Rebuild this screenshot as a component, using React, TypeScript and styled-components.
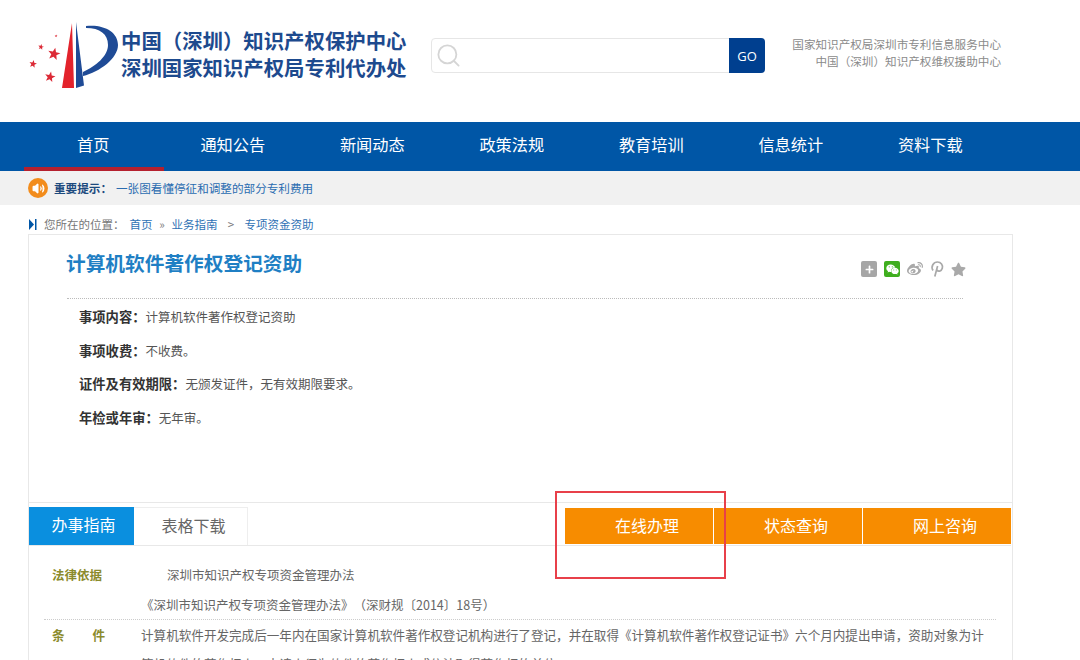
import React from 'react';
import styled, { createGlobalStyle } from 'styled-components';
import { Search, Volume2 } from 'lucide-react';
import { FaPlus, FaStar, FaWeibo, FaWeixin } from 'react-icons/fa';

const GlobalStyle = createGlobalStyle`
  html, body {
    margin: 0;
    padding: 0;
    height: 660px;
    overflow: hidden;
    background: #fff;
    font-family: "Noto Sans CJK SC", "Liberation Sans", sans-serif;
    text-spacing-trim: space-all;
  }
`;

const Page = styled.div`
  position: relative;
  width: 1080px;
  height: 660px;
  overflow: hidden;
`;

const Header = styled.header`
  height: 122px;
  display: flex;
  align-items: flex-start;
  box-sizing: border-box;
  padding: 20px 79px 0 28px;
`;

const LogoMark = styled.svg`
  width: 93px;
  height: 72px;
  flex: none;
`;

const LogoText = styled.div`
  width: 285px;
  flex: none;
  margin-top: 7px;
  font-size: 20.4px;
  line-height: 27px;
  font-weight: 700;
  color: #1d4a8e;
  white-space: nowrap;
`;

const SearchBox = styled.div`
  width: 334px;
  height: 35px;
  margin: 18px 0 0 25px;
  flex: none;
  display: flex;
  box-sizing: border-box;
  border: 1px solid #e6e6e6;
  border-radius: 4px;
`;

const SearchIcon = styled.div`
  flex: 1;
  display: flex;
  align-items: center;
  padding-left: 3px;
  color: #d5d5d5;
`;

const GoButton = styled.button`
  width: 36px;
  margin: -1px;
  border: none;
  border-radius: 0 4px 4px 0;
  background: #003f8f;
  color: #fff;
  font: 13px "Open Sans", "Liberation Sans", sans-serif;
  padding: 0;
`;

const Org = styled.div`
  margin: 16px 0 0 auto;
  font-size: 11.6px;
  line-height: 17px;
  color: #8a8a8a;
  text-align: right;
  white-space: nowrap;
`;

const Nav = styled.nav`
  height: 49px;
  display: flex;
  padding-left: 24px;
  background: #0056a6;
`;

const NavItem = styled.a<{ $active?: boolean }>`
  width: 139.5px;
  box-sizing: border-box;
  padding-right: 1px;
  text-align: center;
  line-height: 45px;
  font-size: 16.2px;
  color: #fff;
  border-bottom: 4px solid ${(p) => (p.$active ? '#b5202e' : 'transparent')};
`;

const Notice = styled.div`
  height: 34px;
  display: flex;
  align-items: center;
  padding-left: 28px;
  background: #f1f1f1;
  font-size: 11.6px;
`;

const NoticeIcon = styled.span`
  width: 20px;
  height: 20px;
  margin-right: 6px;
  border-radius: 50%;
  background: #f28c1c;
  color: #fff;
  display: flex;
  align-items: center;
  justify-content: center;
`;

const NoticeLabel = styled.b`
  width: 62px;
  color: #1d4a7e;
`;

const NoticeText = styled.span`
  color: #2a6cb0;
`;

const Crumbs = styled.div`
  height: 29px;
  display: flex;
  align-items: flex-end;
  box-sizing: border-box;
  padding: 0 0 1px 29px;
  font-size: 11.5px;
  line-height: 17px;
  color: #777;
`;

const CrumbMark = styled.svg`
  width: 8px;
  height: 11px;
  margin: 0 7px 3px 0;
`;

const CrumbLink = styled.span`
  color: #2f72b5;
`;

const CrumbSep = styled.span<{ $w: number }>`
  width: ${(p) => p.$w}px;
  text-align: center;
  color: #777;
`;

const Card = styled.section`
  width: 985px;
  height: 269px;
  margin: 0 0 0 28px;
  box-sizing: border-box;
  border: 1px solid #e8e8e8;
  padding: 13px 49px 0 38px;
`;

const TitleRow = styled.div`
  display: flex;
  justify-content: space-between;
  align-items: flex-start;
  height: 50px;
  border-bottom: 1px dotted #bbb;
`;

const Title = styled.h1`
  margin: 0 0 0 -1px;
  font-size: 19.7px;
  line-height: 29px;
  font-weight: 700;
  color: #1f7fc4;
`;

const Share = styled.div`
  display: flex;
  align-items: center;
  gap: 7px;
  margin: 13px -3px 0 0;
  color: #a9a9a9;
`;

const ShareSquare = styled.span<{ $bg: string }>`
  width: 16px;
  height: 16px;
  border-radius: 2px;
  background: ${(p) => p.$bg};
  color: #fff;
  display: flex;
  align-items: center;
  justify-content: center;
`;

const Facts = styled.div`
  padding: 1px 0 0 12px;
`;

const Fact = styled.p`
  margin: 0;
  font-size: 12.5px;
  line-height: 33.7px;
  color: #555;
  white-space: nowrap;
`;

const FactLabel = styled.b`
  font-size: 13.3px;
  color: #333;
`;

const Guide = styled.section`
  width: 985px;
  height: 157px;
  margin-left: 28px;
  box-sizing: border-box;
  border-left: 1px solid #e8e8e8;
  border-right: 1px solid #e8e8e8;
  padding-top: 4px;
`;

const TabBar = styled.div`
  display: flex;
  height: 38px;
  margin-right: 1px;
  border-bottom: 1px solid #e8e8e8;
`;

const Tab = styled.div<{ $active?: boolean }>`
  width: ${(p) => (p.$active ? 105 : 114)}px;
  box-sizing: border-box;
  text-align: center;
  font-size: 16px;
  line-height: 35px;
  padding-left: ${(p) => (p.$active ? 4 : 6)}px;
  color: ${(p) => (p.$active ? '#fff' : '#666')};
  background: ${(p) => (p.$active ? '#0a8fdf' : '#fff')};
  border-top: ${(p) => (p.$active ? 'none' : '1px solid #eee')};
  border-right: ${(p) => (p.$active ? 'none' : '1px solid #eee')};
`;

const Actions = styled.div`
  margin-left: auto;
  display: flex;
  gap: 1px;
  height: 36px;
  margin-top: 1px;
`;

const Action = styled.a`
  width: 148px;
  padding-left: 16px;
  box-sizing: border-box;
  background: #f78c00;
  color: #fff;
  text-align: center;
  font-size: 16px;
  line-height: 34px;
`;

const GuideBody = styled.div`
  padding: 16px 16px 0 15px;
`;

const Line = styled.div<{ $indent: number; $h: number }>`
  display: flex;
  height: ${(p) => p.$h}px;
  font-size: 12.5px;
  line-height: 26px;
  color: #666;
  white-space: nowrap;
  padding-left: ${(p) => p.$indent}px;
`;

const Term = styled.b`
  width: 123px;
  flex: none;
  padding-left: 8px;
  box-sizing: border-box;
  color: #8b8b2c;
`;

const CondRow = styled.div`
  display: flex;
  border-top: 1px dotted #ccc;
  font-size: 12.58px;
  line-height: 29px;
  color: #666;
`;

const CondTerm = styled.b`
  width: 97px;
  flex: none;
  box-sizing: border-box;
  padding: 0 36px 0 8px;
  display: flex;
  justify-content: space-between;
  align-self: flex-start;
  color: #8b8b2c;
`;

const PinMark = styled.svg`
  width: 14px;
  height: 16px;
  fill: none;
  stroke: currentColor;
  stroke-width: 1.7;
`;

const Annotation = styled.div`
  position: absolute;
  left: 555px;
  top: 491px;
  width: 171px;
  height: 88px;
  box-sizing: border-box;
  border: 2px solid #e8404a;
`;

const navItems = ['首页', '通知公告', '新闻动态', '政策法规', '教育培训', '信息统计', '资料下载'];

const facts = [
  ['事项内容：', '计算机软件著作权登记资助'],
  ['事项收费：', '不收费。'],
  ['证件及有效期限：', '无颁发证件，无有效期限要求。'],
  ['年检或年审：', '无年审。'],
];

const Star = ({ x, y, r }: { x: number; y: number; r: number }) => {
  const points = Array.from({ length: 10 }, (_, i) => {
    const a = (Math.PI / 5) * i - Math.PI / 2 + 0.2;
    const d = i % 2 ? r * 0.42 : r;
    return `${x + d * Math.cos(a)},${y + d * Math.sin(a)}`;
  }).join(' ');
  return <polygon points={points} fill="#dc2a36" />;
};

export default function App() {
  return (
    <Page>
      <GlobalStyle />
      <Header>
        <LogoMark viewBox="28 20 93 72">
          <Star x={54} y={54} r={6.5} />
          <Star x={50} y={77} r={5.5} />
          <Star x={33} y={64} r={4} />
          <Star x={41} y={47} r={3} />
          <Star x={56} y={36} r={1.5} />
          <polygon points="72,23 62,88 74,88" fill="#e3232c" />
          <path
            d="M76 22 L84 85.5 L76 88 Z M86 26 C104 24 118 32 118 45 C118 58 100 72 83 76 L83 72 C96 66 108 56 108 45 C108 34 100 28 86 28 Z"
            fill="#1f4b96"
          />
        </LogoMark>
        <LogoText>
          中国（深圳）知识产权保护中心
          <br />
          深圳国家知识产权局专利代办处
        </LogoText>
        <SearchBox>
          <SearchIcon>
            <Search size={27} strokeWidth={1.6} />
          </SearchIcon>
          <GoButton>GO</GoButton>
        </SearchBox>
        <Org>
          国家知识产权局深圳市专利信息服务中心
          <br />
          中国（深圳）知识产权维权援助中心
        </Org>
      </Header>

      <Nav>
        {navItems.map((item, i) => (
          <NavItem key={item} $active={i === 0}>
            {item}
          </NavItem>
        ))}
      </Nav>

      <Notice>
        <NoticeIcon>
          <Volume2 size={13} fill="#fff" />
        </NoticeIcon>
        <NoticeLabel>重要提示：</NoticeLabel>
        <NoticeText>一张图看懂停征和调整的部分专利费用</NoticeText>
      </Notice>

      <Crumbs>
        <CrumbMark viewBox="0 0 8 11">
          <polygon points="0,0 5,5.5 0,11" fill="#0056a6" />
          <rect x="6" y="0" width="1.5" height="11" fill="#0056a6" />
        </CrumbMark>
        您所在的位置：
        <CrumbSep $w={5} />
        <CrumbLink>首页</CrumbLink>
        <CrumbSep $w={19}>»</CrumbSep>
        <CrumbLink>业务指南</CrumbLink>
        <CrumbSep $w={27}>&gt;</CrumbSep>
        <CrumbLink>专项资金资助</CrumbLink>
      </Crumbs>

      <Card>
        <TitleRow>
          <Title>计算机软件著作权登记资助</Title>
          <Share>
            <ShareSquare $bg="#a6a6a6">
              <FaPlus size={9} />
            </ShareSquare>
            <ShareSquare $bg="#3fae1e">
              <FaWeixin size={13} />
            </ShareSquare>
            <FaWeibo size={16} />
            <PinMark viewBox="0 0 14 16">
              <path d="M3 9.5 C0.5 5.5 3.5 1 7.5 1 C11 1 13.2 4 12.3 7.3 C11.4 10.5 8 11 7 9 M7.6 5 L4.8 15.5" />
            </PinMark>
            <FaStar size={15} />
          </Share>
        </TitleRow>
        <Facts>
          {facts.map(([label, value]) => (
            <Fact key={label}>
              <FactLabel>{label}</FactLabel>
              {value}
            </Fact>
          ))}
        </Facts>
      </Card>

      <Guide>
        <TabBar>
          <Tab $active>办事指南</Tab>
          <Tab>表格下载</Tab>
          <Actions>
            <Action>在线办理</Action>
            <Action>状态查询</Action>
            <Action>网上咨询</Action>
          </Actions>
        </TabBar>
        <GuideBody>
          <Line $indent={0} $h={30}>
            <Term>法律依据</Term>
            深圳市知识产权专项资金管理办法
          </Line>
          <Line $indent={97} $h={27}>
            《深圳市知识产权专项资金管理办法》（深财规〔2014〕18号）
          </Line>
          <CondRow>
            <CondTerm>
              <span>条</span>
              <span>件</span>
            </CondTerm>
            <span>
              计算机软件开发完成后一年内在国家计算机软件著作权登记机构进行了登记，并在取得《计算机软件著作权登记证书》六个月内提出申请，资助对象为计算机软件的著作权人，申请人须为软件的著作权人或依法取得著作权的单位。
            </span>
          </CondRow>
        </GuideBody>
      </Guide>

      <Annotation />
    </Page>
  );
}
